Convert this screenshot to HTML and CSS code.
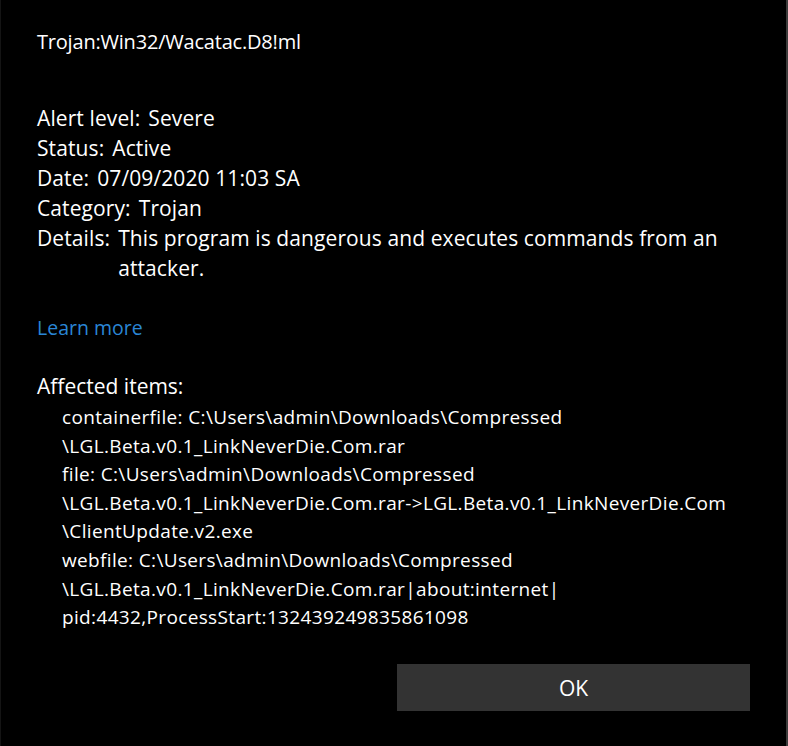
FILE: index.html
```html
<!DOCTYPE html>
<html>
<head>
<meta charset="utf-8">
<link rel="stylesheet" href="styles.css">
</head>
<body>
<div class="dialog">
  <div class="content">
    <div class="title">Trojan:Win32/Wacatac.D8!ml</div>
    <div class="meta">
      <div class="row"><span class="label">Alert level:</span><span class="value">Severe</span></div>
      <div class="row"><span class="label">Status:</span><span class="value">Active</span></div>
      <div class="row"><span class="label">Date:</span><span class="value">07/09/2020 11:03 SA</span></div>
      <div class="row"><span class="label">Category:</span><span class="value">Trojan</span></div>
      <div class="row"><span class="label">Details:</span><span class="value">This program is dangerous and executes commands from an<br>attacker.</span></div>
    </div>
    <a class="learn" href="#">Learn more</a>
    <div class="affected">Affected items:</div>
    <div class="items">
      <div class="item">containerfile: C:\Users\admin\Downloads\Compressed<br>\LGL.Beta.v0.1_LinkNeverDie.Com.rar</div>
      <div class="item">file: C:\Users\admin\Downloads\Compressed<br>\LGL.Beta.v0.1_LinkNeverDie.Com.rar-&gt;LGL.Beta.v0.1_LinkNeverDie.Com<br>\ClientUpdate.v2.exe</div>
      <div class="item">webfile: C:\Users\admin\Downloads\Compressed<br>\LGL.Beta.v0.1_LinkNeverDie.Com.rar|about:internet|<br>pid:4432,ProcessStart:132439249835861098</div>
    </div>
  </div>
  <div class="footer">
    <button class="ok">OK</button>
  </div>
</div>
</body>
</html>
```
FILE: styles.css
```css
html, body {
  margin: 0;
  padding: 0;
  background: #000;
}
body {
  width: 788px;
  height: 746px;
  overflow: hidden;
  font-family: "Open Sans", "Noto Sans", sans-serif;
  color: #fff;
}
.dialog {
  box-sizing: border-box;
  width: 788px;
  height: 746px;
  border-left: 1px solid #141414;
  border-right: 2px solid #3c3c3c;
  display: flex;
  flex-direction: column;
}
.content {
  padding: 27px 0 0 36px;
  font-size: 21px;
  line-height: 30px;
}
.title {
  font-size: 20px;
  letter-spacing: -0.2px;
  margin-bottom: 46px;
}
.meta {
  letter-spacing: 0.1px;
}
.row {
  display: flex;
}
.label {
  flex: none;
}
.value {
  margin-left: 8px;
}
.learn {
  display: block;
  margin-top: 30px;
  font-size: 19.5px;
  color: #2a86d6;
  text-decoration: none;
}
.affected {
  margin-top: 28px;
}
.items {
  padding-top: 2px;
  padding-left: 25px;
  font-size: 19px;
  letter-spacing: 0.35px;
  line-height: 28.6px;
}
.footer {
  margin-top: auto;
  display: flex;
  justify-content: flex-end;
  padding: 0 36px 35px 0;
}
.ok {
  width: 353px;
  height: 47px;
  border: none;
  background: #333;
  color: #fff;
  font-family: "Open Sans", "Noto Sans", sans-serif;
  font-size: 21px;
}
```
